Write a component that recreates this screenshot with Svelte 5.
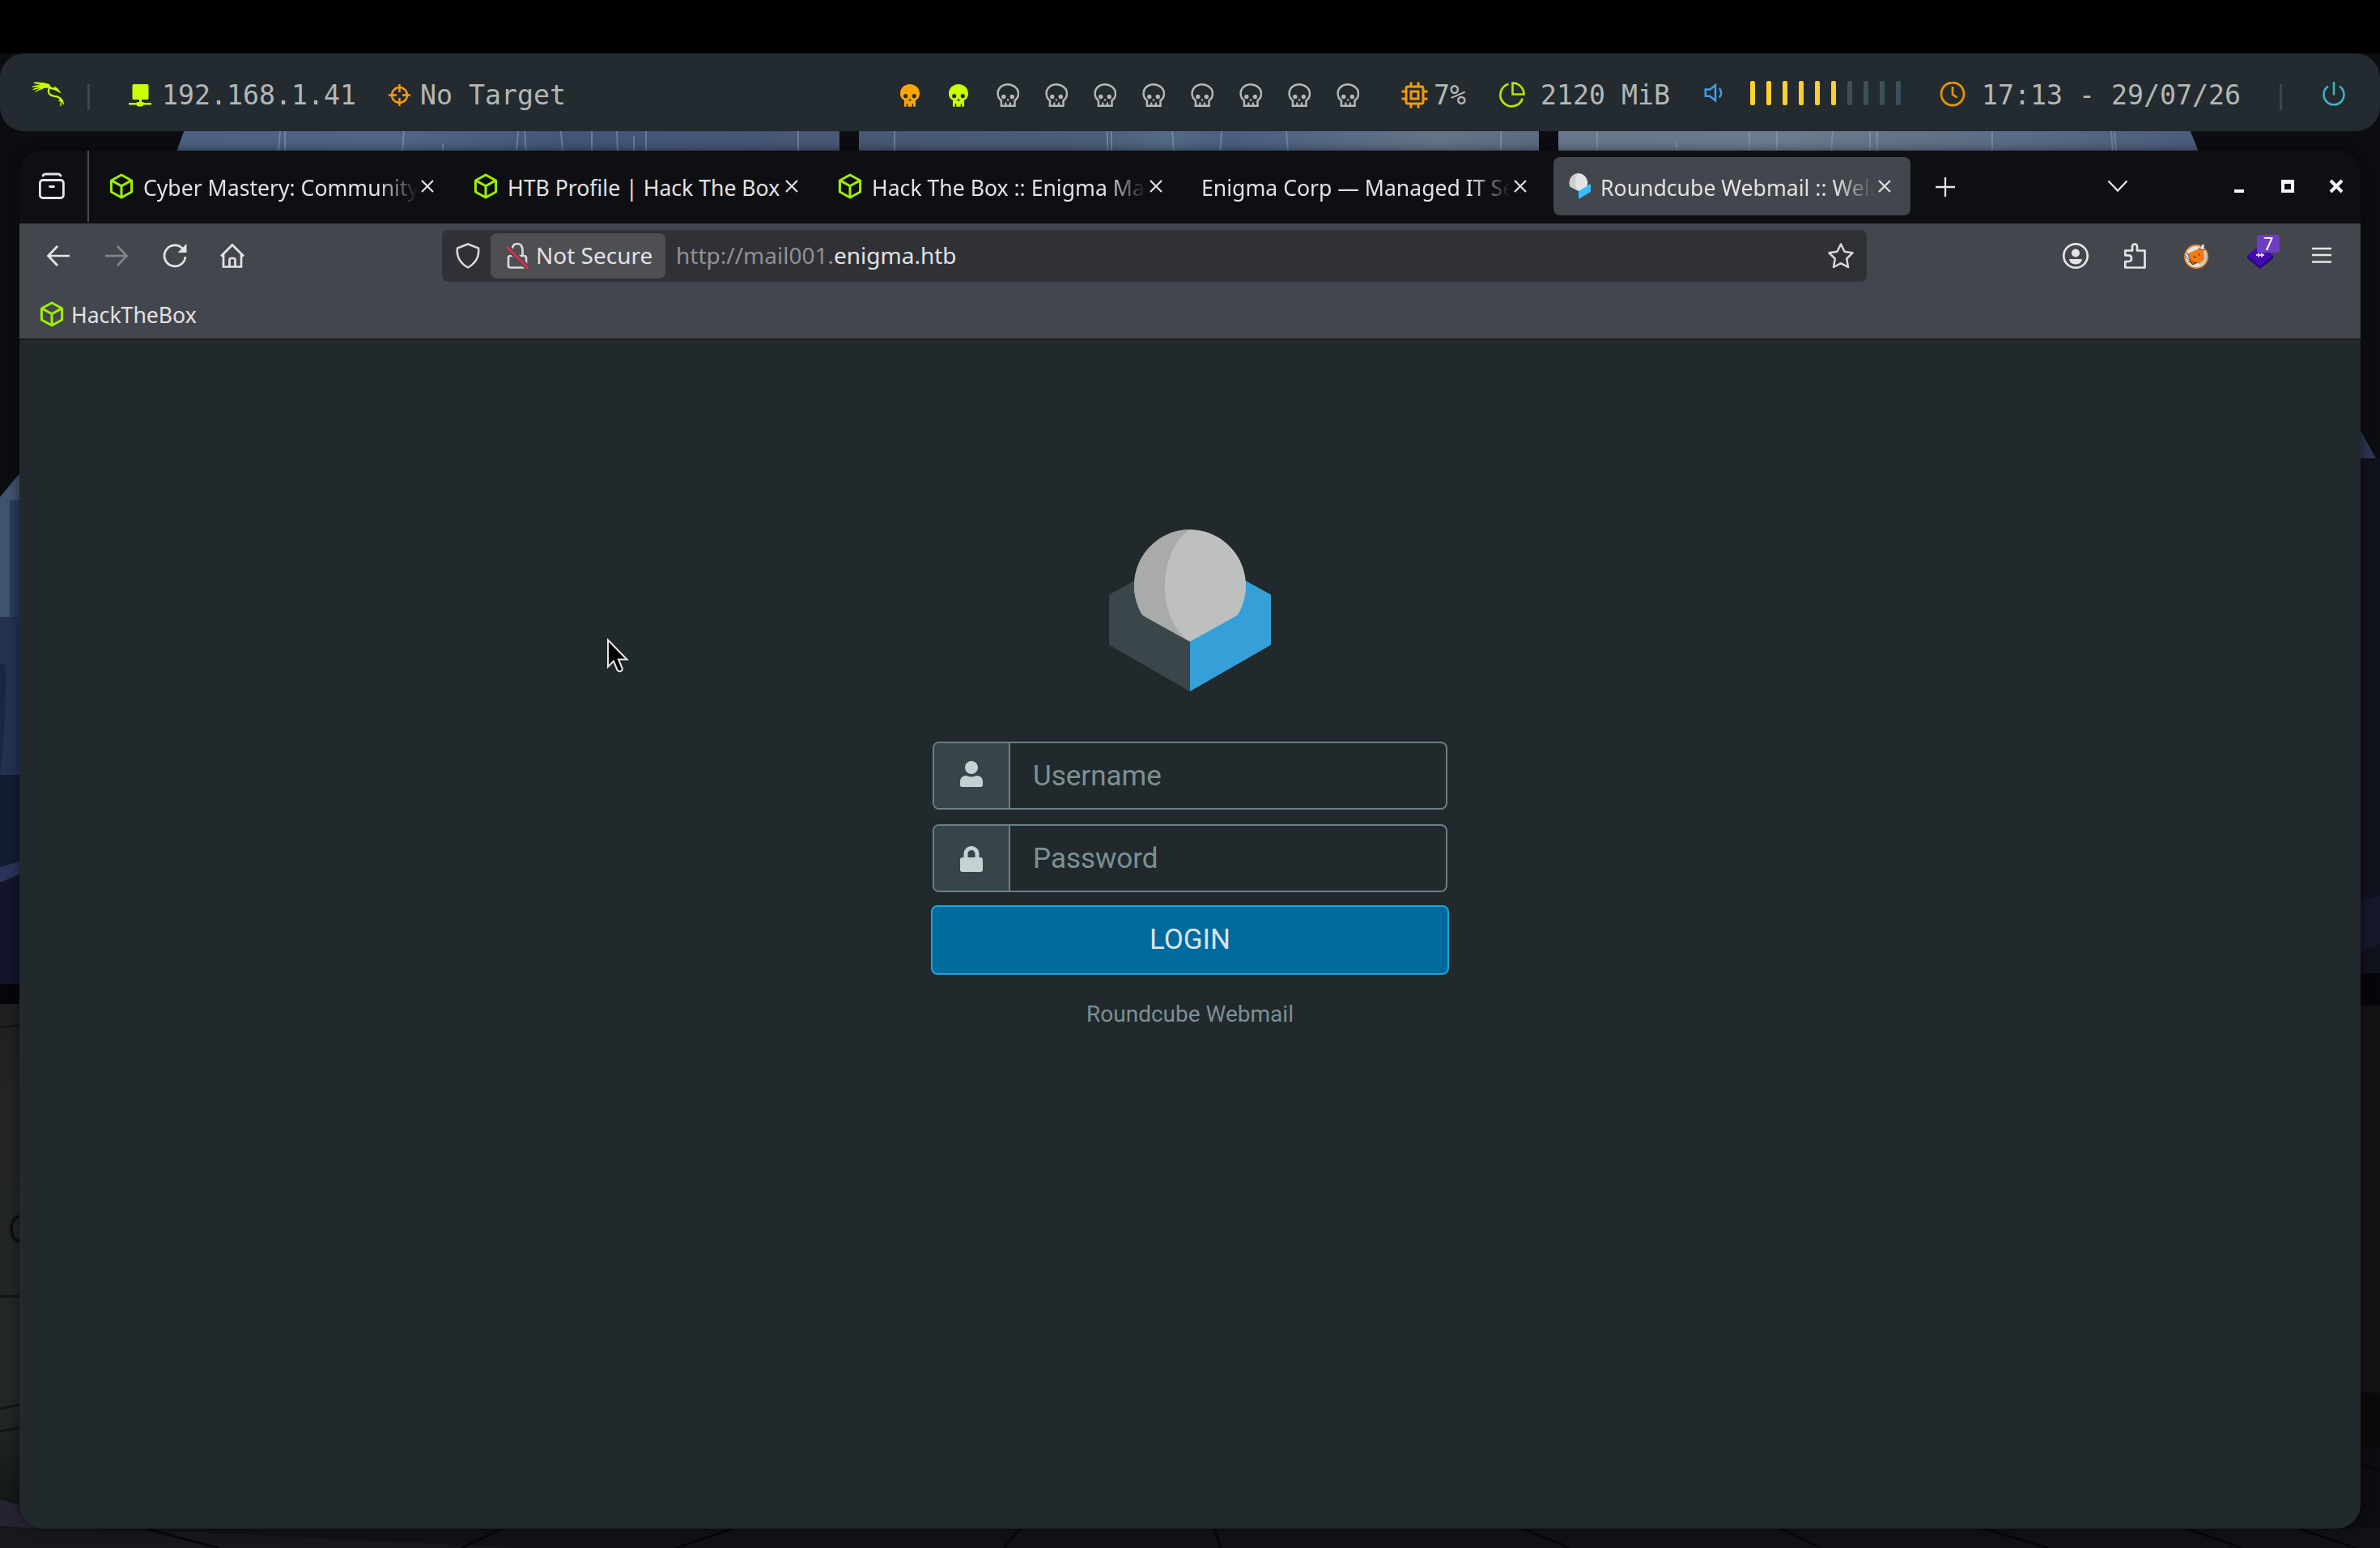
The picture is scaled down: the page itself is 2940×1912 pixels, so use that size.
<script lang="ts">
  type Tab = {
    id: number;
    title: string;
    icon?: 'htb' | 'roundcube';
  };

  const tabs: Tab[] = [
    { id: 1, title: 'Cyber Mastery: Community', icon: 'htb' },
    { id: 2, title: 'HTB Profile | Hack The Box', icon: 'htb' },
    { id: 3, title: 'Hack The Box :: Enigma Mac', icon: 'htb' },
    { id: 4, title: 'Enigma Corp — Managed IT Se' },
    { id: 5, title: 'Roundcube Webmail :: Welc', icon: 'roundcube' },
  ];

  const workspaces = ['active', 'occupied', ...Array(8).fill('empty')];
  const volumeSteps = 10;

  let activeTab = $state(5);
  let volume = $state(6);
  let username = $state('');
  let password = $state('');
</script>

{#snippet cube()}
  <svg class="cube" viewBox="0 0 32 32" width="32" height="32">
    <path
      d="M16 2 28.6 9v14L16 30 3.4 23V9ZM4.6 9.4 16 15.8l11.4-6.4M16 15.8V29"
      fill="none"
      stroke="#9fef00"
      stroke-width="3"
      stroke-linejoin="round"
    />
  </svg>
{/snippet}

{#snippet closeGlyph()}
  <path d="m2 2 14 14M16 2 2 16" fill="none" stroke="currentColor" stroke-width="2.2" />
{/snippet}

<div class="desktop">
  <svg class="wallpaper" viewBox="0 0 2940 1912" width="2940" height="1912">
    <defs>
      <linearGradient id="pane-a">
        <stop offset="0" stop-color="#4d6080" />
        <stop offset="0.35" stop-color="#506585" />
        <stop offset="0.6" stop-color="#435676" />
        <stop offset="1" stop-color="#485876" />
      </linearGradient>
      <linearGradient id="pane-b">
        <stop offset="0" stop-color="#475874" />
        <stop offset="0.35" stop-color="#4b5d7a" />
        <stop offset="0.45" stop-color="#546b86" />
        <stop offset="0.55" stop-color="#4a5e80" />
        <stop offset="0.85" stop-color="#647589" />
        <stop offset="1" stop-color="#5c6b82" />
      </linearGradient>
      <linearGradient id="pane-c">
        <stop offset="0" stop-color="#67768a" />
        <stop offset="0.35" stop-color="#6b7c8f" />
        <stop offset="0.7" stop-color="#5b6d86" />
        <stop offset="1" stop-color="#4b5c7c" />
      </linearGradient>
      <linearGradient id="cabinet" x2="0" y2="1">
        <stop offset="0" stop-color="#1d1f20" />
        <stop offset="0.2" stop-color="#232525" />
        <stop offset="0.8" stop-color="#242727" />
        <stop offset="1" stop-color="#131616" />
      </linearGradient>
    </defs>
    <rect width="2940" height="1912" fill="#0c0d12" />
    <path d="M228 160h809v30H217Z" fill="url(#pane-a)" />
    <path d="M1061 160h840v30h-840Z" fill="url(#pane-b)" />
    <path d="M1925 160h780l12 30h-792Z" fill="url(#pane-c)" />
    <path
      d="M346 162l-2 26M352 162v26M499 162l-2 26M547 178v10M640 162l-2 26M648 162l2 26M693 162l2 26M731 162v26M762 162l1 26M783 168v20M798 162v26M986 162v26M1105 162v26M1368 162v26M1373 162v26M1448 162l2 26M1509 162l-2 26M1589 162l2 26M1854 162v26M1973 162v26M2071 175v13M2161 162v26M2195 162v26M2264 162l-2 26M2310 162v26M2319 162v26M2461 162v26M2608 162l2 26M2612 162l2 26"
      fill="none"
      stroke="#8fa3c0"
      stroke-width="2"
      opacity="0.5"
    />
    <path d="M0 614 24 585v180H0Z" fill="#40526e" />
    <path d="M12 618h12v340H12Z" fill="#293a5a" />
    <path d="M0 762h24v200H0Z" fill="#243252" />
    <path d="M0 820q7-4 7 10 0 80-7 125Z" fill="#1a2643" />
    <path d="M0 957h24v115H0Z" fill="#131c33" />
    <path d="m0 1071 24-7v20l-24 14Z" fill="#29345a" />
    <path d="m0 1090 24-10v136H0Z" fill="#12152b" />
    <path d="M0 1215h24v30H0Z" fill="#05060b" />
    <path d="M0 1240h24v625H0Z" fill="url(#cabinet)" />
    <path d="M0 1269 24 1266M0 1601h24M0 1740l24-5M0 1768l24-4" stroke="#131515" stroke-width="3" />
    <path d="M26 1502q-12 2-12 16t12 16" fill="none" stroke="#0e0f10" stroke-width="4" />
    <path d="m0 1852 50 14 40 26-90-7Z" fill="#242330" />
    <path d="m2916 532 19 34h-19Z" fill="#2b374e" />
    <path d="M2916 566h24v636h-24Z" fill="#0f111c" />
    <path d="m2916 1112 24-6v60l-24 10Z" fill="#141828" />
    <path d="M2916 1202h24v40h-24Z" fill="#04060c" />
    <path d="M2916 1242h24v480h-24Z" fill="#101214" />
    <path d="M2916 1720h24v70h-24Z" fill="#090b0b" />
    <path d="M0 1888h2940v24H0Z" fill="#111117" />
    <path d="m0 1886 240 6 400 20H0Z" fill="#17171e" />
    <path
      d="m180 1888 90 24M620 1888l-50 24M905 1888l-70 24M1260 1888l-20 24M1500 1888l8 24M1880 1888l60 24M2200 1888l50 24M2450 1888l80 24M2700 1888l70 24M2880 1790l60 28M2840 1888l70 24"
      fill="none"
      stroke="#07080c"
      stroke-width="3"
    />
  </svg>

  <div class="bezel"></div>

  <header class="statusbar">
    <svg class="dragon" viewBox="0 0 40 34" width="40" height="34">
      <g fill="#ccff00">
        <path d="M2 1.600q11-.8 19 2.400l1.500 3.500-4 1Q10 4 2 3Z" />
        <path d="M0 6.500q9-2.500 20-.5v2.500Q10 6 0 7.800Z" />
        <path d="M.5 10.200Q8 6 18 7v1.800Q9 8 .8 11.300Z" />
        <path d="M3 13.500Q8 9 14 8.500l-1 1.600q-5 .9-9.500 4Z" />
        <path d="m20 5 4 3 4 .5-1.500-2.500L31 9l5 6.500-4.500-2.300Q28 11 22.500 10Z" />
      </g>
      <g fill="none" stroke="#ccff00" stroke-linecap="round">
        <path d="M21.500 8q-3 4.500-.5 8 2 2.300 6 2.800 8 .8 10 6.200" stroke-width="2.300" />
        <path d="M27 18.500q6 .5 8.500 5.500l-.5 6.500M37 24.500l1.500 4M33 24.500l2-.5" stroke-width="1.500" />
      </g>
    </svg>
    <div class="separator first"></div>
    <svg class="host" viewBox="0 0 28 32" width="28" height="32">
      <path
        d="M6 3h17q1.500 0 1.500 1.500v16q0 1.500-1.500 1.500h-7v3h2.500v1H28v2.500h-9.500q-1 2-2.500 2h-4q-1.500 0-2.500-2H0V26h10v-1h3v-3H6q-1.500 0-1.500-1.500v-16Q4.500 3 6 3Z"
        fill="#ccff00"
      />
    </svg>
    <span class="ip">192.168.1.41</span>
    <svg class="target" viewBox="0 0 28 32" width="28" height="32">
      <circle cx="13.500" cy="16.500" r="9.500" fill="none" stroke="#f59a0a" stroke-width="2.500" />
      <path
        d="M13.500 3v10M13.500 20v10M0 16.500h10M17 16.500h10"
        fill="none"
        stroke="#f59a0a"
        stroke-width="2.500"
      />
    </svg>
    <span class="target-name">No Target</span>

    <div class="workspaces">
      {#each workspaces as state, i (i)}
        <svg class={['skull', state]} viewBox="0 0 30 32" width="30" height="32">
          {#if state === 'empty'}
            <path
              d="M15.800 3.200c-7 0-12.200 5-12.200 11.400 0 4 1.700 6.800 4.300 8.600v6.600h16.600v-6.600c2.600-1.800 4.500-4.600 4.500-8.600C29 8.200 22.800 3.200 15.800 3.200Z"
              fill="none"
              stroke="currentColor"
              stroke-width="2.500"
            />
            <circle cx="10.800" cy="18.500" r="2.700" fill="currentColor" />
            <circle cx="21.300" cy="18.500" r="2.700" fill="currentColor" />
            <path d="m16 20.500 1.800 3h-3.600Z" fill="currentColor" />
            <path d="M13.300 25.500v3.500M18.900 25.500v3.500" stroke="currentColor" stroke-width="2.200" />
          {:else}
            <path
              fill-rule="evenodd"
              d="M15 3C8 3 3 8 3 14.500c0 4 1.500 6.700 5 8.300v8h2.700v-3.500h1.600v3.500h5.400v-3.500h1.600v3.500H22v-8c3.500-1.600 5-4.300 5-8.300C27 8 22 3 15 3ZM9.700 15a2.600 2.600 0 1 1 0 5.200 2.600 2.600 0 0 1 0-5.200Zm10.600 0a2.600 2.600 0 1 1 0 5.200 2.600 2.600 0 0 1 0-5.200ZM15 20.500l2 3h-4Z"
              fill="currentColor"
            />
          {/if}
        </svg>
      {/each}
    </div>

    <svg class="cpu" viewBox="0 0 34 34" width="34" height="34">
      <g fill="none" stroke="#f59a0a" stroke-width="3">
        <rect x="6" y="7" width="21" height="21" rx="2" />
        <rect x="12" y="13" width="9" height="9" />
        <path
          d="M12 1.500v5M21 1.500v5M12 28.500v5M21 28.500v5M.5 13h5M.5 22h5M27.500 13h5M27.500 22h5"
        />
      </g>
    </svg>
    <span class="cpu-load">7%</span>
    <svg class="memory" viewBox="0 0 32 32" width="32" height="32">
      <g fill="none" stroke="#b0e600" stroke-width="2.700">
        <path d="M11.500 2.800A14 14 0 1 0 28.800 20.500" />
        <path d="M16.500 1.500V15.500h14A14 14 0 0 0 16.500 1.500Z" />
      </g>
    </svg>
    <span class="memory-used">2120 MiB</span>
    <svg class="speaker" viewBox="0 0 24 24" width="24" height="24">
      <g fill="none" stroke="#3f9cf0" stroke-width="2.500">
        <path d="M1.800 7.500h5.500L14 2.200v19l-6.700-5.400H1.800Z" />
        <path d="M19 6q4.500 5.700 0 11.500" />
      </g>
    </svg>
    <div class="volume">
      {#each Array(volumeSteps) as _, i (i)}
        <i class:on={i < volume}></i>
      {/each}
    </div>
    <svg class="clock" viewBox="0 0 32 32" width="32" height="32">
      <circle cx="16" cy="15" r="14" fill="none" stroke="#e59400" stroke-width="2.800" />
      <path d="M16 6v9.500l5.500 4" fill="none" stroke="#e59400" stroke-width="2.700" />
    </svg>
    <span class="time">17:13 - 29/07/26</span>
    <div class="separator last"></div>
    <svg class="power" viewBox="0 0 30 32" width="30" height="32">
      <path
        d="M15 0v16.500M8 5.500a12.500 12.500 0 1 0 14 0"
        fill="none"
        stroke="#3fb6c8"
        stroke-width="2.500"
      />
    </svg>
  </header>

  <div class="browser">
    <div class="tabstrip">
      <div class="sidebar-toggle">
        <svg viewBox="0 0 34 34" width="34" height="34">
          <g fill="none" stroke="#e4e4e6" stroke-width="2.800" stroke-linecap="round">
            <rect x="2.400" y="9.500" width="29" height="22" rx="3.500" />
            <path d="M6 4q1-2 3-2h16q2 0 3 2M14.500 17.500h5" />
          </g>
        </svg>
      </div>
      <div class="tabs">
        {#each tabs as tab (tab.id)}
          <div
            class="tab"
            class:active={tab.id === activeTab}
            class:plain={!tab.icon}
            onclick={() => (activeTab = tab.id)}
            onkeypress={() => (activeTab = tab.id)}
            role="tab"
            aria-selected={tab.id === activeTab}
            tabindex="0"
          >
            {#if tab.icon === 'htb'}
              {@render cube()}
            {:else if tab.icon === 'roundcube'}
              <svg viewBox="0 0 32 32" width="32" height="32">
                <path d="M2 13v11l14 8V20Z" fill="#3a4a50" />
                <path d="m31 13-15 8v11l15-9Z" fill="#37beff" />
                <path d="M16 0a12 12 0 0 0-10.500 16.500L16 22l10.500-6A12 12 0 0 0 16 0Z" fill="#e4e4e4" />
                <path d="M16 0a12 12 0 0 0-10.500 16.500L16 22Q8 11 16 0Z" fill="#cfcfcf" />
              </svg>
            {/if}
            <span class="tab-title" class:fits={tab.id === 2}>{tab.title}</span>
            <svg class="tab-close" viewBox="0 0 18 18" width="18" height="18">
              {@render closeGlyph()}
            </svg>
          </div>
        {/each}
      </div>
      <svg class="new-tab" viewBox="0 0 26 26" width="26" height="26">
        <path d="M13 1v24M1 13h24" stroke="#e4e4e6" stroke-width="2.300" />
      </svg>
      <svg class="all-tabs" viewBox="0 0 26 16" width="26" height="16">
        <path d="m1.500 1.500 11.500 12 11.500-12" fill="none" stroke="#e4e4e6" stroke-width="2.300" />
      </svg>
      <div class="window-controls">
        <svg viewBox="0 0 18 18" width="18" height="18">
          <path d="M3 13h12v4H3Z" fill="#f4f4f4" />
        </svg>
        <svg viewBox="0 0 18 18" width="18" height="18">
          <path fill-rule="evenodd" d="M1 1h16v16H1Zm4 5v7h8V6Z" fill="#f4f4f4" />
        </svg>
        <svg viewBox="0 0 18 18" width="18" height="18">
          <path d="m2 2 14 14M16 2 2 16" stroke="#f4f4f4" stroke-width="4" />
        </svg>
      </div>
    </div>

    <div class="navbar">
      <div class="nav-buttons">
        <svg viewBox="0 0 32 32" width="32" height="32">
          <path d="M30 16H4M15 4 3.500 16 15 28" />
        </svg>
        <svg class="disabled" viewBox="0 0 32 32" width="32" height="32">
          <path d="M2 16h26M17 4l11.500 12L17 28" />
        </svg>
        <svg viewBox="0 0 32 32" width="32" height="32">
          <path d="M26 7.500A13 13 0 1 0 29 17" />
          <path d="M30.500 1v11h-11Z" fill="#e4e4e6" stroke="none" />
        </svg>
        <svg viewBox="0 0 32 32" width="32" height="32">
          <path d="M1 16.500 15 2.500 29 16.500M4 14v15.500h22V14" />
          <path d="M11.500 29V21q0-2 2-2h3q2 0 2 2v8" />
        </svg>
      </div>

      <div class="urlbar">
        <svg class="shield" viewBox="0 0 32 32" width="32" height="32">
          <path
            d="M16 1.500 29 6.500Q31 22 16 30.500 1 22 3 6.500Z"
            fill="none"
            stroke="#d8d8da"
            stroke-width="2.500"
            stroke-linejoin="round"
          />
        </svg>
        <div class="identity">
          <svg viewBox="0 0 30 34" width="30" height="34">
            <g fill="none" stroke="#d8d8da" stroke-width="2.700">
              <rect x="4" y="17" width="22" height="14.500" rx="2.500" />
              <path d="M8.500 11q0-9 6.500-9t6.500 9v6" />
            </g>
            <path d="M2 5.500 28.500 32.500" stroke="#4e4f52" stroke-width="7" />
            <path d="M2 5.500 28.500 32.500" stroke="#e22850" stroke-width="2.600" />
          </svg>
          <span>Not Secure</span>
        </div>
        <span class="url">http://mail001.<b>enigma.htb</b></span>
        <svg class="star" viewBox="0 0 34 34" width="34" height="34">
          <path
            d="m17 2.500 4.500 9.300 10 1.500-7.300 7.200 1.800 10.500-9-4.800L8 31l1.800-10.500-7.300-7.200 10-1.500Z"
            fill="none"
            stroke="#d8d8da"
            stroke-width="2.500"
            stroke-linejoin="round"
          />
        </svg>
      </div>

      <div class="toolbar-buttons">
        <svg viewBox="0 0 32 32" width="32" height="32">
          <circle cx="16" cy="16" r="14.700" />
          <circle cx="16" cy="12.500" r="5" fill="#e4e4e6" stroke="none" />
          <path d="M8 20h16q-1 6.500-8 6.500T8 20Z" fill="#e4e4e6" stroke="none" />
        </svg>
        <svg viewBox="0 0 32 32" width="32" height="32">
          <path
            d="M1.300 30.500V23H5q4 0 4-3.800t-4-3.800H1.300V9.500H10V5q0-3.500 3-3.500t3 3.500v4.500h9.500v21Z"
            stroke-linejoin="round"
          />
        </svg>
        <svg viewBox="0 0 32 32" width="32" height="32">
          <circle cx="13" cy="17" r="14" fill="#dfe4ea" stroke="#f08a24" stroke-width="1.800" />
          <path d="M1 14 12 9l10-5 1 12q1 7-5 10L5 23Z" fill="#f57c12" stroke="none" />
          <path d="m-3 12 5 1 4 8-3-1Z" fill="#ececec" stroke="#333" stroke-width="0.800" />
          <path d="m17 7 4-6 2 1v7Z" fill="#f4f4f4" stroke="#333" stroke-width="0.800" />
          <path d="m9 17 4 1M16 13l1 3M5 23l8 1.500-4 2Z" stroke="#80400c" stroke-width="1.500" />
          <path d="M25 13q1 10-8 13.500" stroke="#b6c7dc" stroke-width="3" />
        </svg>
        <div class="extension">
          <svg viewBox="0 0 32 32" width="32" height="32">
            <path d="M0 15v4l16 13 16-13v-4L16 26Z" fill="#2a0578" stroke="none" />
            <path d="M16 2 32 15.500 16 29 0 15.500Z" fill="#4408b0" stroke="none" />
            <path d="M11 15h10M14 12.500v5M18 12.500v5" stroke="#dcd0f4" stroke-width="2" />
          </svg>
          <span class="badge">7</span>
        </div>
        <svg viewBox="0 0 32 32" width="32" height="32">
          <path d="M4 7h24M4 15h24M4 23.500h24" />
        </svg>
      </div>
    </div>

    <div class="bookmarks">
      {@render cube()}
      <span>HackTheBox</span>
    </div>

    <main class="page">
      <svg class="logo" viewBox="0 0 200 200" width="200" height="200">
        <path d="M0 80.500 41 58l59 80.500V200L0 142.500Z" fill="#3a464a" />
        <path d="M200 80.500 159 58l-59 80.500V200l100-57.500Z" fill="#35a0d8" />
        <path
          d="M100 0a69.500 69.500 0 0 0-59.500 104.500q1 1.500 2.500 2.300L100 138.500l57-31.700q1.500-.8 2.500-2.300A69.500 69.500 0 0 0 100 0Z"
          fill="#bec0bf"
        />
        <path
          d="M100 0a69.500 69.500 0 0 0-59.500 104.500q1 1.500 2.500 2.300L100 138.500C79 124 69 98 69 70S80 13 100 0Z"
          fill="#a9abaa"
        />
      </svg>
      <form class="login" onsubmit={e => e.preventDefault()}>
        <label class="field">
          <span class="field-icon">
            <svg viewBox="0 0 28 32" width="28" height="32">
              <circle cx="14" cy="8" r="8" />
              <path d="M8 18q6 3 12 0 8 0 8 8v3.500q0 2.500-2.500 2.500h-23Q0 32 0 29.500V26q0-8 8-8Z" />
            </svg>
          </span>
          <input type="text" placeholder="Username" bind:value={username} />
        </label>
        <label class="field">
          <span class="field-icon lock">
            <svg viewBox="0 0 28 32" width="28" height="32">
              <path
                fill-rule="evenodd"
                d="M4.500 14V9.500a9.500 9.500 0 0 1 19 0V14h1.500q3 0 3 3v12q0 3-3 3H3q-3 0-3-3V17q0-3 3-3Zm5 0h9V9.500a4.500 4.500 0 0 0-9 0Z"
              />
            </svg>
          </span>
          <input type="password" placeholder="Password" bind:value={password} />
        </label>
        <button type="submit">LOGIN</button>
      </form>
      <div class="product">Roundcube Webmail</div>
    </main>
  </div>

  <svg class="pointer" viewBox="0 0 30 44" width="30" height="44">
    <path
      d="M2 3.500v33l7-7 4.500 11q1.500 2.500 4.500 1.500 2.500-1.500 1.500-4L15 27.500h10.500Z"
      fill="#000"
      stroke="#e8e8e8"
      stroke-width="2"
    />
  </svg>
</div>

<style>
  :global(body) {
    background: #000;
  }
  .desktop {
    position: relative;
    display: flex;
    flex-direction: column;
    width: 2940px;
    height: 1912px;
    overflow: hidden;
    font-family: 'Noto Sans', sans-serif;
  }
  .desktop svg {
    display: block;
    flex: none;
  }
  .wallpaper {
    position: absolute;
    inset: 0;
    z-index: -1;
  }
  .bezel {
    height: 66px;
    background: #000;
  }

  .statusbar {
    display: flex;
    align-items: center;
    box-sizing: border-box;
    height: 96px;
    padding: 5px 42px 0 40px;
    border-radius: 30px;
    background: #232b30;
    color: #b4b7b6;
    font-family: 'DejaVu Sans Mono', monospace;
    font-size: 33.22px;
    white-space: pre;
  }
  .statusbar span {
    padding-top: 1px;
  }
  .separator {
    width: 3px;
    height: 32px;
    margin-top: 7px;
    background: #374854;
  }
  .separator.first {
    margin-left: 28px;
  }
  .separator.last {
    margin-left: 48px;
  }
  .host {
    margin-left: 48px;
  }
  .ip {
    width: 240px;
    margin-left: 13px;
  }
  .target {
    margin-left: 40px;
  }
  .target-name {
    width: 180px;
    margin-left: 11px;
  }
  .workspaces {
    display: flex;
    gap: 30px;
    margin-left: 410px;
  }
  .skull {
    color: #b4b7b6;
  }
  .skull.active {
    color: #ffa500;
  }
  .skull.occupied {
    color: #ccff00;
  }
  .cpu {
    margin-left: 52px;
  }
  .cpu-load {
    width: 40px;
    margin-left: 6px;
  }
  .memory {
    margin-left: 41px;
  }
  .memory-used {
    width: 160px;
    margin-left: 19px;
  }
  .speaker {
    margin: -4px 0 0 42px;
  }
  .volume {
    display: flex;
    gap: 14px;
    margin: -3px 0 0 33px;
  }
  .volume i {
    width: 6px;
    height: 30px;
    border-radius: 2px;
    background: #3c505c;
  }
  .volume i.on {
    background: #ffd12e;
  }
  .clock {
    margin-left: 48px;
  }
  .time {
    width: 320px;
    margin-left: 20px;
  }
  .power {
    margin-left: 49px;
  }

  .browser {
    display: flex;
    flex-direction: column;
    height: 1702px;
    margin: 24px 24px 0;
    border-radius: 30px;
    overflow: hidden;
    background: #21292c;
    box-shadow: 0 0 14px rgba(0, 0, 0, 0.5);
    color: #e2e2e4;
  }
  .tabstrip {
    display: flex;
    align-items: center;
    box-sizing: border-box;
    height: 90px;
    padding: 0 21px 2px 0;
    background: #0e0f13;
    font-size: 26.6px;
  }
  .sidebar-toggle {
    display: flex;
    align-items: center;
    align-self: stretch;
    width: 86px;
    box-sizing: border-box;
    padding-left: 23px;
    border-right: 2px solid #4b4c50;
  }
  .tabs {
    display: flex;
    gap: 9px;
    margin-left: 9px;
  }
  .tab {
    display: flex;
    align-items: center;
    box-sizing: border-box;
    width: 441px;
    height: 72px;
    padding: 0 23px 0 15px;
    border-radius: 8px;
  }
  .tab.plain {
    padding-left: 4px;
  }
  .tab.active {
    background: #44464d;
  }
  .tab-title {
    flex: 1;
    min-width: 0;
    margin: 4px 3px 0 11px;
    overflow: hidden;
    white-space: nowrap;
    mask-image: linear-gradient(to left, transparent, #000 48px);
  }
  .tab-title.fits {
    margin-right: 0;
    mask-image: none;
  }
  .new-tab {
    margin: 2px 0 0 30px;
  }
  .all-tabs {
    margin-left: auto;
  }
  .window-controls {
    display: flex;
    gap: 42px;
    margin-left: 128px;
  }

  .navbar {
    display: flex;
    align-items: center;
    box-sizing: border-box;
    height: 80px;
    padding: 0 32px;
    background: #44464d;
    font-size: 28px;
  }
  .nav-buttons,
  .toolbar-buttons {
    display: flex;
    gap: 40px;
    fill: none;
    stroke: #e4e4e6;
    stroke-width: 2.7px;
  }
  .toolbar-buttons {
    gap: 44px;
    margin-left: auto;
  }
  .toolbar-buttons svg {
    overflow: visible;
  }
  .disabled {
    opacity: 0.4;
  }
  .urlbar {
    display: flex;
    align-items: center;
    box-sizing: border-box;
    width: 1760px;
    height: 64px;
    margin-left: 242px;
    padding: 0 15px 0 16px;
    border-radius: 8px;
    background: #303136;
  }
  .identity {
    display: flex;
    align-items: center;
    box-sizing: border-box;
    gap: 8px;
    width: 216px;
    height: 56px;
    margin-left: 12px;
    padding-left: 18px;
    border-radius: 8px;
    background: #4e4f52;
    white-space: nowrap;
  }
  .identity span,
  .url {
    padding-bottom: 2px;
  }
  .url {
    margin-left: 13px;
    color: #909194;
  }
  .url b {
    color: #e2e2e4;
    font-weight: 400;
  }
  .star {
    margin-left: auto;
  }
  .extension {
    position: relative;
  }
  .badge {
    position: absolute;
    top: -10px;
    left: 12px;
    width: 28px;
    height: 22px;
    border-radius: 3px;
    background: #6f3cc4;
    color: #fff;
    font-size: 22px;
    line-height: 20px;
    text-align: center;
  }
  .bookmarks {
    display: flex;
    align-items: center;
    gap: 8px;
    height: 64px;
    padding: 2px 24px 0;
    box-sizing: border-box;
    border-bottom: 2px solid #1b1c1f;
    background: #44464d;
    font-size: 26.6px;
  }
  .bookmarks span {
    padding-top: 1px;
  }

  .page {
    display: flex;
    flex: 1;
    flex-direction: column;
    align-items: center;
    padding-top: 234px;
    font-family: Roboto, sans-serif;
  }
  .login {
    display: flex;
    flex-direction: column;
    align-items: center;
    gap: 18px;
    margin-top: 62px;
  }
  .field {
    display: flex;
    box-sizing: border-box;
    width: 636px;
    height: 84px;
    border: 2px solid #6a7f85;
    border-radius: 8px;
    overflow: hidden;
  }
  .field-icon {
    display: flex;
    align-items: center;
    justify-content: center;
    box-sizing: border-box;
    width: 94px;
    border-right: 2px solid #6a7f85;
    background: #374549;
    fill: #c5d1d3;
    padding-bottom: 4px;
  }
  .field-icon.lock {
    padding: 2px 0 0;
  }
  input {
    flex: 1;
    min-width: 0;
    padding: 0 28px;
    border: 0;
    outline: 0;
    background: transparent;
    color: #c5d1d3;
    font-family: inherit;
    font-size: 35px;
  }
  input::placeholder {
    color: #7c9095;
    opacity: 1;
  }
  button {
    box-sizing: border-box;
    width: 640px;
    height: 86px;
    margin-top: -2px;
    padding: 0 0 2px;
    border: 2px solid #239fdb;
    border-radius: 8px;
    background: #006a9d;
    color: #d9e3e8;
    font-family: inherit;
    font-size: 35px;
  }
  .product {
    margin-top: 32px;
    color: #7c9095;
    font-size: 28px;
    line-height: 34px;
  }

  .pointer {
    position: absolute;
    top: 787px;
    left: 749px;
  }
</style>
